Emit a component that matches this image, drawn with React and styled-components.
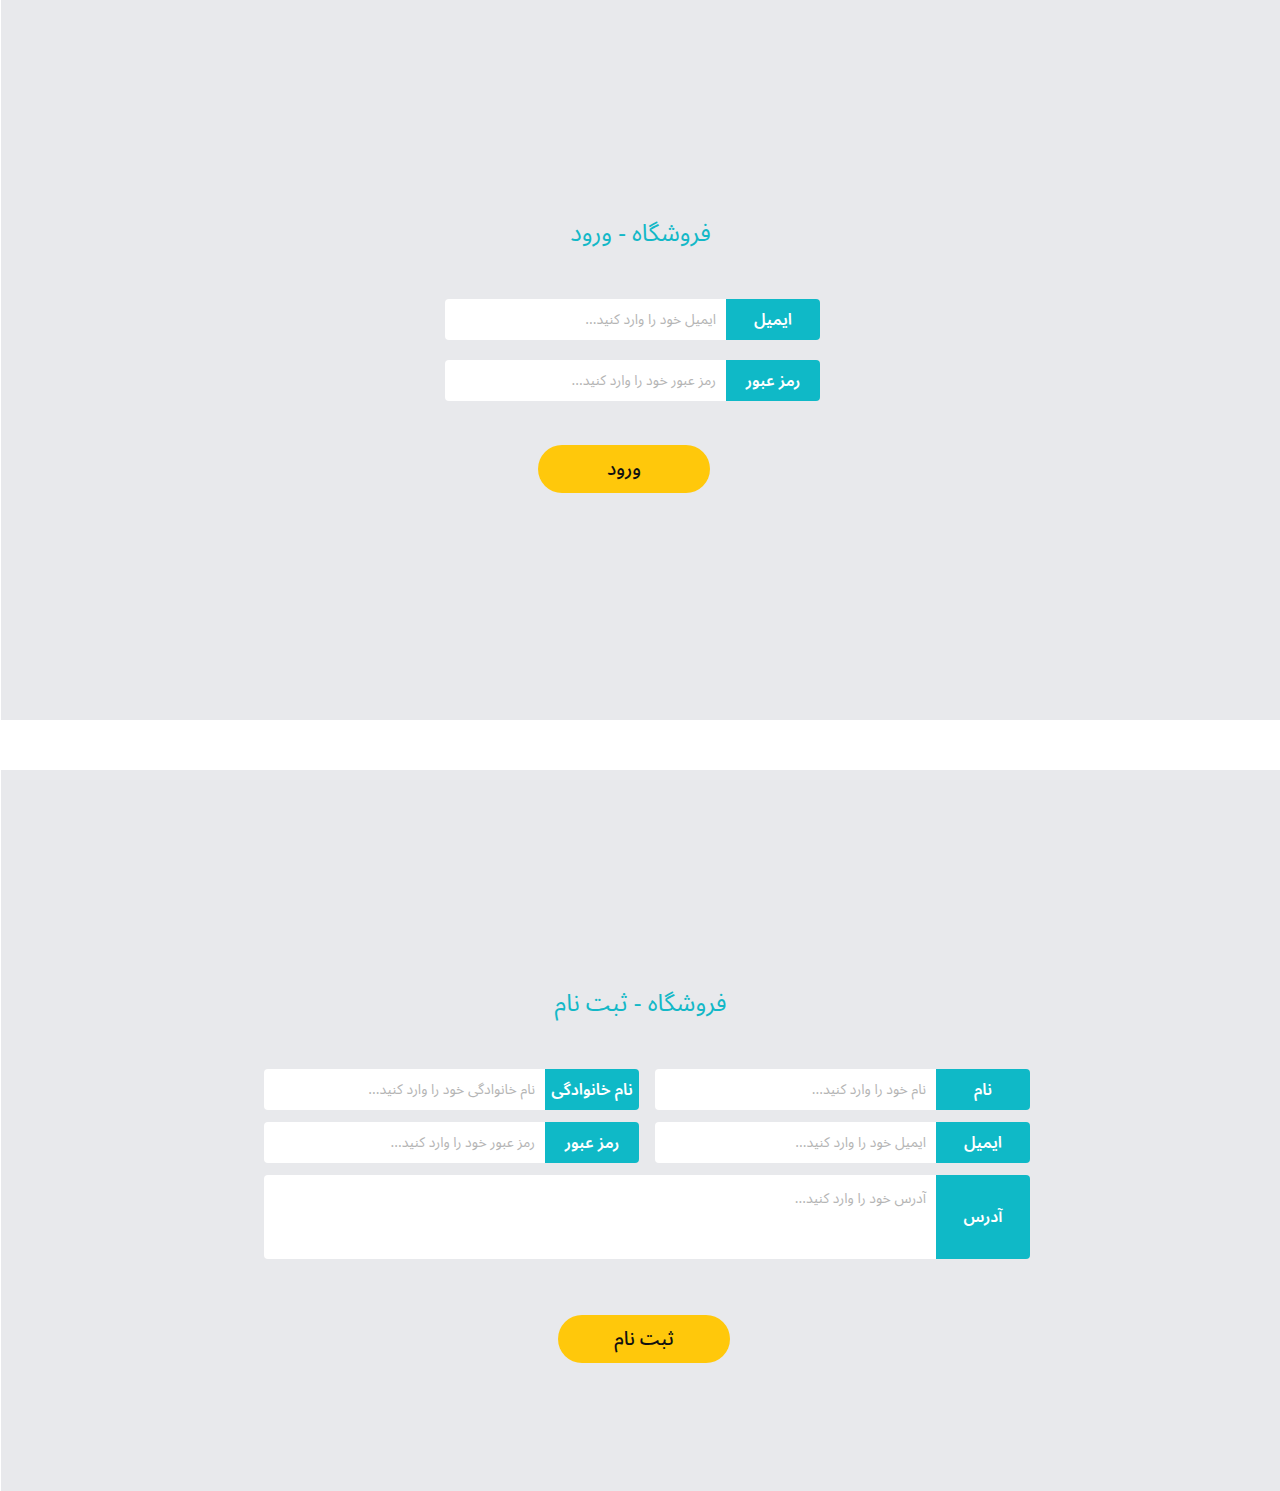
import React from 'react';
import styled, { createGlobalStyle } from 'styled-components';

const GlobalStyle = createGlobalStyle`
  body {
    margin: 0;
    background: #fff;
    font-family: "Noto Sans Arabic", "DejaVu Sans", "Noto Sans", sans-serif;
  }
  * { box-sizing: border-box; }
`;

const Section = styled.section`
  margin-left: 1px;
  height: ${(p) => p.height}px;
  background: #e8e9ec;
  padding-top: 215px;
  display: flex;
  flex-direction: column;
`;
const Gap = styled.div`
  height: 50px;
`;
const Title = styled.h2`
  margin: 0;
  height: 36px;
  line-height: 38px;
  text-align: center;
  font-size: 24px;
  font-weight: 400;
  color: #13b8c7;
`;
const LoginForm = styled.div`
  width: 375px;
  margin-left: 444px;
  margin-top: 48px;
  display: flex;
  flex-direction: column;
  gap: 20px;
`;
const Grid = styled.div`
  width: 766px;
  margin-left: 263px;
  margin-top: 48px;
  display: grid;
  grid-template-columns: 375px 375px;
  column-gap: 16px;
  row-gap: 12px;
  direction: rtl;
`;
const Group = styled.div`
  direction: rtl;
  display: flex;
  height: ${(p) => p.h || 41}px;
  grid-column: ${(p) => (p.wide ? '1 / -1' : 'auto')};
`;
const Label = styled.div`
  width: 94px;
  flex: none;
  background: #0fb9c7;
  color: #fff;
  font-size: 16px;
  font-weight: 600;
  display: flex;
  align-items: center;
  justify-content: center;
  border-radius: 0 4px 4px 0;
  white-space: nowrap;
`;
const Input = styled.input`
  flex: 1;
  min-width: 0;
  border: none;
  outline: none;
  background: #fff;
  border-radius: 4px 0 0 4px;
  padding: 0 10px;
  font-family: inherit;
  font-size: 14px;
  direction: rtl;
  &::placeholder { color: #b5b5b5; }
`;
const TextArea = styled.textarea`
  flex: 1;
  border: none;
  outline: none;
  resize: none;
  background: #fff;
  border-radius: 4px 0 0 4px;
  padding: 9px 10px;
  font-family: inherit;
  font-size: 14px;
  direction: rtl;
  &::placeholder { color: #b5b5b5; }
`;
const Button = styled.button`
  width: 172px;
  height: 48px;
  margin-left: ${(p) => p.left}px;
  margin-top: ${(p) => p.top}px;
  border: none;
  border-radius: 24px;
  background: #ffc80b;
  color: #111;
  font-family: inherit;
  font-size: 19px;
  font-weight: 500;
  cursor: pointer;
`;

function Field({ label, placeholder, wide, area }) {
  return (
    <Group wide={wide} h={area ? 84 : 41}>
      <Label>{label}</Label>
      {area ? <TextArea placeholder={placeholder} /> : <Input placeholder={placeholder} />}
    </Group>
  );
}

export default function App() {
  return (
    <>
      <GlobalStyle />
      <Section height={720}>
        <Title>فروشگاه - ورود</Title>
        <LoginForm>
          <Field label="ایمیل" placeholder="ایمیل خود را وارد کنید..." />
          <Field label="رمز عبور" placeholder="رمز عبور خود را وارد کنید..." />
        </LoginForm>
        <Button left={537} top={44}>ورود</Button>
      </Section>
      <Gap />
      <Section height={721}>
        <Title>فروشگاه - ثبت نام</Title>
        <Grid>
          <Field label="نام" placeholder="نام خود را وارد کنید..." />
          <Field label="نام خانوادگی" placeholder="نام خانوادگی خود را وارد کنید..." />
          <Field label="ایمیل" placeholder="ایمیل خود را وارد کنید..." />
          <Field label="رمز عبور" placeholder="رمز عبور خود را وارد کنید..." />
          <Field wide area label="آدرس" placeholder="آدرس خود را وارد کنید..." />
        </Grid>
        <Button left={557} top={56}>ثبت نام</Button>
      </Section>
    </>
  );
}
